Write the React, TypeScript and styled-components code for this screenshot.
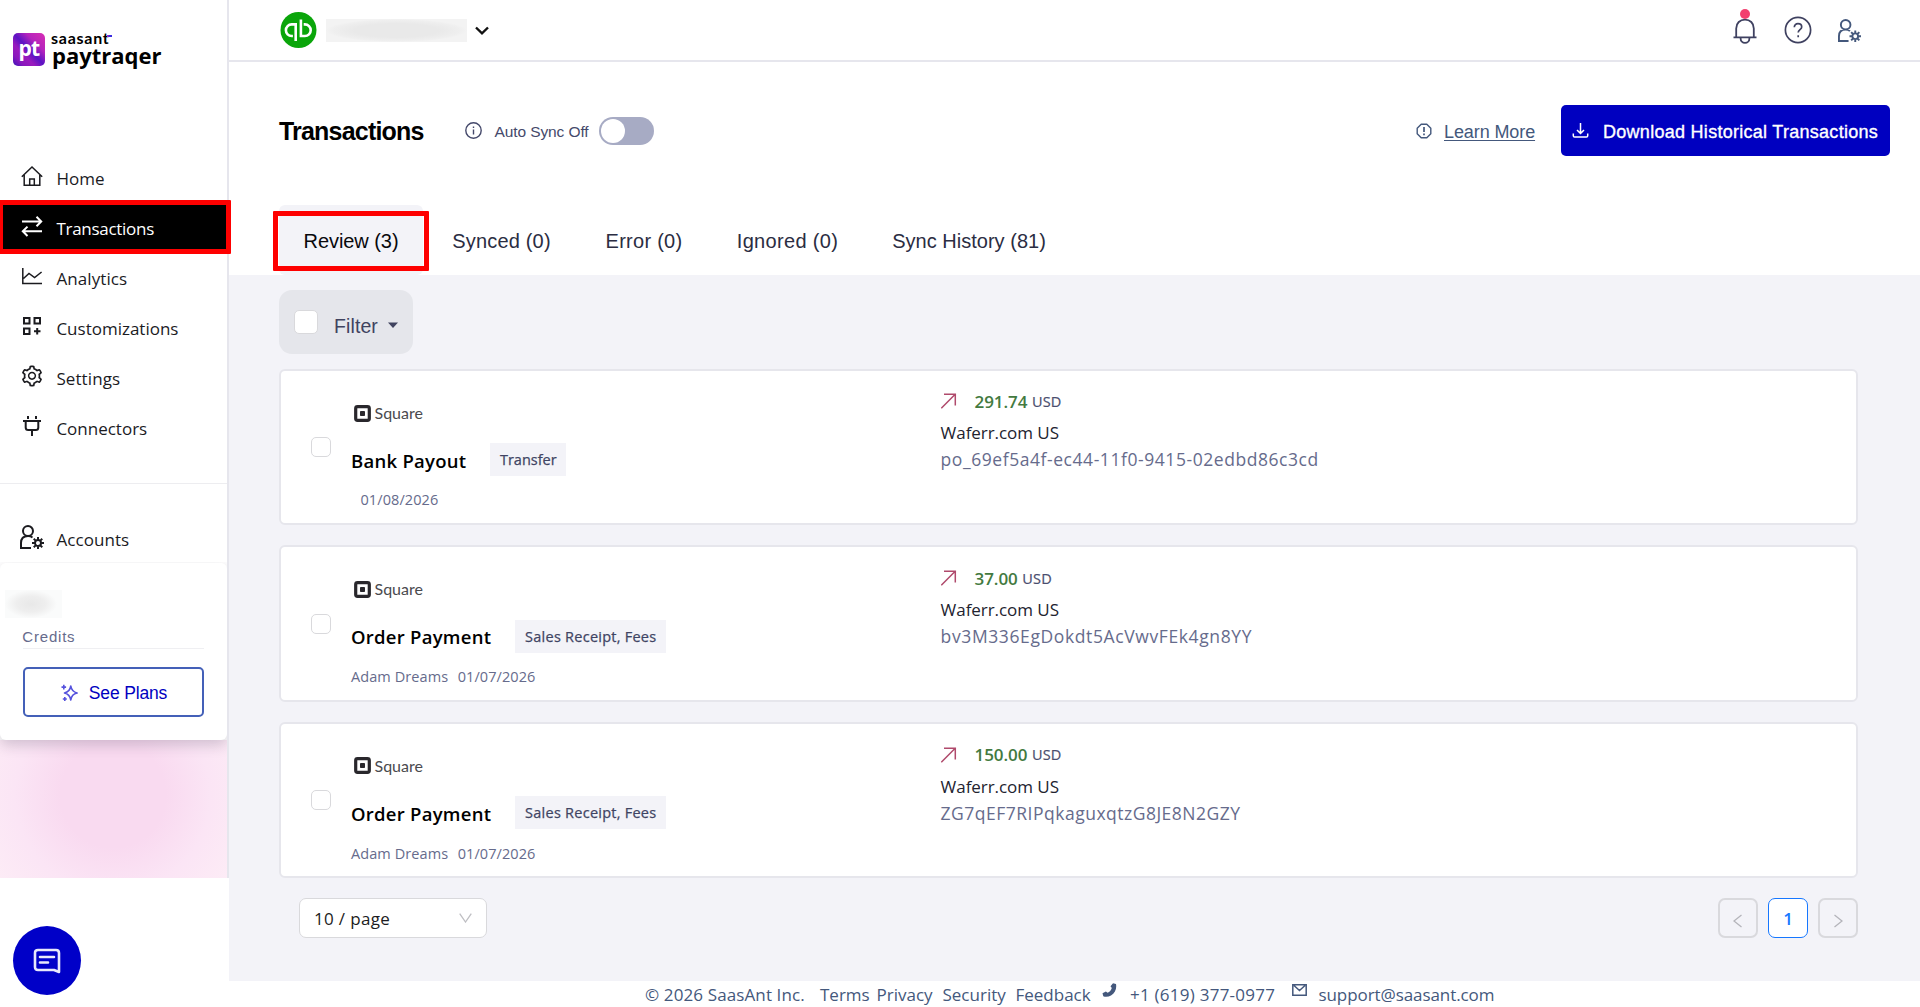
import React from "react";
import styled, { createGlobalStyle } from "styled-components";
import { GrUserSettings } from "react-icons/gr";
import { AiOutlineSetting } from "react-icons/ai";

const humanist = `"Open Sans", "Noto Sans", sans-serif`;
const grotesk = `"Liberation Sans", Arial, sans-serif`;

const Global = createGlobalStyle`
  * { box-sizing: border-box; }
  body { margin: 0; background: #fff; font-family: ${humanist}; color: #1c1c22; overflow: hidden; }
  svg { display: block; flex: none; }
`;

const Shell = styled.div`
  display: flex;
  height: 1007px;
  width: 1920px;
`;

/* ---------- sidebar ---------- */
const Aside = styled.aside`
  width: 229px;
  height: 878px;
  flex: none;
  border-right: 2px solid #e6e6ed;
  display: flex;
  flex-direction: column;
`;
const Brand = styled.div`
  height: 153px;
  padding: 25px 0 0 13px;
  display: flex;
  align-items: flex-start;
  gap: 6px;
`;
const BrandMark = styled.div`
  width: 32px;
  height: 33px;
  margin-top: 8px;
  border-radius: 5px;
  background: linear-gradient(to bottom left, #d92fb4 0%, #b424bd 30%, #5a14c4 50%, #9a1bbd 66%, #8a18bd 82%, #3a13b8 100%);
  color: #fff;
  font: 700 21px/30px ${humanist};
  letter-spacing: -0.8px;
  text-align: center;
`;
const BrandText = styled.div`
  display: flex;
  flex-direction: column;
  color: #000;
`;
const BrandTop = styled.span`
  position: relative;
  width: 61px;
  font: 700 16px/26px Lato, sans-serif;
  letter-spacing: 0.75px;
  height: 17px;
  &::after {
    content: "";
    position: absolute;
    right: 0;
    top: 10px;
    width: 5px;
    height: 2px;
    background: linear-gradient(90deg, #c02bc0, #3a2be0 50%);
  }
`;
const BrandName = styled.span`
  font: 700 22px/26px ${humanist};
  padding-left: 1px;
`;
const Nav = styled.nav`
  display: flex;
  flex-direction: column;
`;
const NavItem = styled.a<{ $active?: boolean; $ls?: number }>`
  position: relative;
  height: 50px;
  padding-left: 20px;
  display: flex;
  align-items: center;
  gap: 12.4px;
  font-size: 17px;
  letter-spacing: ${(p) => p.$ls ?? 0}px;
  background: ${(p) => (p.$active ? "#000" : "transparent")};
  color: ${(p) => (p.$active ? "#fff" : "#1b1b1f")};
  svg { margin-top: -4px; }
`;
const GrIcon = styled(GrUserSettings)<{ $c: string }>`
  path { stroke: ${(p) => p.$c}; }
`;
const Highlight = styled.div<{ $l: number; $t: number; $w: number; $h: number }>`
  position: absolute;
  z-index: 3;
  left: ${(p) => p.$l}px;
  top: ${(p) => p.$t}px;
  width: ${(p) => p.$w}px;
  height: ${(p) => p.$h}px;
  border: 5px solid #fe0000;
  border-radius: 1px;
`;
const AccountRow = styled.div`
  margin-top: 30px;
  padding-top: 30px;
  border-top: 1px solid #ededf0;
  height: 80px;
`;
const Credits = styled.section`
  height: 177px;
  padding: 27px 23px 0 23px;
  border-radius: 6px;
  background: #fff;
  position: relative;
  box-shadow: 0 5px 14px rgba(40, 30, 60, 0.2);
  clip-path: inset(-1px 0 -30px 0);
`;
const Redacted = styled.div`
  width: 57px;
  height: 28px;
  margin-left: -18px;
  background: radial-gradient(ellipse closest-side at 26px 14px, #e8e8e8, #eeeeee 55%, #fafbfb);
`;
const RedactedBar = styled.div`
  width: 141px;
  height: 23px;
  margin-left: 9px;
  background: radial-gradient(ellipse closest-side, #e9e9e9 60%, #efefef 90%, #f3f3f3);
`;
const CreditLabel = styled.div`
  margin: 7px 0 18px;
  height: 24px;
  border-bottom: 1px solid #efeff2;
  font: 15px/23px ${grotesk};
  letter-spacing: 0.8px;
  text-indent: -0.7px;
  color: #666b8c;
`;
const PlanButton = styled.button`
  width: 181px;
  height: 50px;
  padding: 2px 0 0 1px;
  border: 2px solid #4460b8;
  border-radius: 5px;
  background: #fff;
  display: flex;
  align-items: center;
  justify-content: center;
  gap: 11px;
  color: #0000c0;
  font: 17.5px ${grotesk};
  letter-spacing: -0.15px;
`;
const Glow = styled.div`
  flex: 1;
  background: radial-gradient(circle 150px at 113px 55px, #f9daf0 35%, #fbe5f5 65%, #fdedf6 100%);
`;
const ChatBubble = styled.button`
  position: absolute;
  left: 13px;
  top: 926px;
  width: 68px;
  height: 69px;
  padding: 0;
  border: 0;
  border-radius: 50%;
  background: #0000c8;
  display: grid;
  place-items: center;
`;

/* ---------- main ---------- */
const Main = styled.main`
  flex: 1;
  display: flex;
  flex-direction: column;
`;
const TopBar = styled.header`
  height: 62px;
  border-bottom: 2px solid #e6e6ed;
  padding: 0 59px 0 50.5px;
  display: flex;
  align-items: center;
`;
const TopIcons = styled.div`
  margin-left: auto;
  display: flex;
  align-items: center;
  gap: 26px;
`;
const BellWrap = styled.div`
  position: relative;
  margin-right: 1px;
  padding-top: 1px;
  &::after {
    content: "";
    position: absolute;
    left: 7px;
    top: -7px;
    width: 10px;
    height: 10px;
    border-radius: 50%;
    background: #f2406f;
  }
`;
const TitleRow = styled.div`
  height: 143px;
  padding: 43px 30px 0 50px;
  display: flex;
  align-items: flex-start;
  justify-content: space-between;
`;
const TitleGroup = styled.div`
  height: 51px;
  display: flex;
  align-items: center;
`;
const Title = styled.h1`
  margin: 0;
  width: 186px;
  font: 700 25px/30px ${grotesk};
  letter-spacing: -0.8px;
  color: #000;
`;
const SyncLabel = styled.span`
  margin: 0 8.5px 0 12.5px;
  padding-top: 2px;
  width: 96px;
  white-space: nowrap;
  font: 15.5px ${grotesk};
  letter-spacing: -0.1px;
  color: #45496b;
`;
const Toggle = styled.span`
  width: 55px;
  height: 28px;
  padding: 2px;
  border-radius: 14px;
  background: #a7abc4;
  &::before {
    content: "";
    display: block;
    width: 24px;
    height: 24px;
    border-radius: 50%;
    background: #fff;
  }
`;
const Learn = styled.a`
  margin: 0 26px 0 12px;
  padding-top: 3px;
  width: 91px;
  white-space: nowrap;
  font: 18px ${grotesk};
  letter-spacing: -0.1px;
  color: #44587c;
  text-decoration: underline;
  text-underline-offset: 2px;
  text-decoration-thickness: 1px;
`;
const Download = styled.button`
  width: 329px;
  height: 51px;
  padding: 0 0 0 11px;
  border: 0;
  border-radius: 5px;
  background: #0000c0;
  color: #fff;
  display: flex;
  align-items: center;
  gap: 14px;
  white-space: nowrap;
  font: 18px ${grotesk};
  letter-spacing: 0.28px;
  -webkit-text-stroke: 0.35px #fff;
  span { padding-top: 3px; }
`;
const Tabs = styled.div`
  position: relative;
  height: 70px;
  padding-left: 50px;
  display: flex;
`;
const Tab = styled.button<{ $w: number; $ls: number; $on?: boolean }>`
  width: ${(p) => p.$w}px;
  padding: 2px 0 0;
  border: 0;
  border-radius: 6px;
  background: ${(p) => (p.$on ? "#f3f3f8" : "transparent")};
  color: ${(p) => (p.$on ? "#08080c" : "#2b2d42")};
  font: 20px ${grotesk};
  letter-spacing: ${(p) => p.$ls}px;
  white-space: nowrap;
`;
const Content = styled.div`
  height: 706px;
  background: #f3f3f8;
  padding: 15px 62px 0 50px;
`;
const Filter = styled.div`
  width: 134px;
  height: 64px;
  padding: 0 15px;
  border-radius: 13px;
  background: #e5e6eb;
  display: flex;
  align-items: center;
  color: #40435f;
  font: 19.5px ${grotesk};
  letter-spacing: 0.1px;
  svg { margin-top: 6px; }
`;
const Check = styled.span<{ $s: number }>`
  display: block;
  flex: none;
  width: ${(p) => p.$s}px;
  height: ${(p) => p.$s}px;
  border: 1px solid #d9d9dc;
  border-radius: 5px;
  background: #fff;
`;
const FilterLabel = styled.span`
  margin: 9px 10px 0 16px;
`;
const Cards = styled.div`
  margin-top: 15px;
  display: flex;
  flex-direction: column;
  gap: 20px;
`;
const Card = styled.article`
  height: 156.4px;
  border: 2px solid #e6e6ec;
  border-radius: 6px;
  background: #fff;
  display: grid;
  grid-template-columns: 70px 589.6px 1fr;
`;
const CheckCell = styled.div`
  padding: 66.2px 0 0 30px;
`;
const InfoCell = styled.div<{ $gap: number }>`
  padding-top: 32px;
  display: grid;
  align-content: start;
  grid-template-rows: 20px 33px 20px;
  row-gap: ${(p) => p.$gap}px;
`;
const Vendor = styled.div`
  padding-left: 2.5px;
  display: flex;
  align-items: center;
  gap: 4px;
  font: 400 16px/20px Lato, sans-serif;
  color: #4a4a4e;
`;
const NameRow = styled.div`
  margin-top: 3px;
  height: 33px;
  display: flex;
  align-items: center;
`;
const Name = styled.span`
  font-weight: 600;
  font-size: 18.5px;
  letter-spacing: 0.26px;
  color: #000;
  padding-top: 1px;
`;
const Tag = styled.span<{ $w: number; $ls: number }>`
  margin-left: 24px;
  width: ${(p) => p.$w}px;
  height: 33px;
  background: #f3f3f8;
  color: #404463;
  font-size: 14.5px;
  letter-spacing: ${(p) => p.$ls}px;
  line-height: 33px;
  text-align: center;
  white-space: nowrap;
  -webkit-text-stroke: 0.25px #404463;
`;
const Meta = styled.div`
  display: flex;
  gap: 9.5px;
  font-size: 14.5px;
  line-height: 20px;
  letter-spacing: 0.08px;
  color: #666b8c;
`;
const MoneyCell = styled.div<{ $top: number }>`
  padding-top: ${(p) => p.$top}px;
`;
const AmountRow = styled.div`
  height: 22px;
  display: flex;
  align-items: center;
  color: #4a4e6e;
  font-size: 14.5px;
  letter-spacing: 0.2px;
  -webkit-text-stroke: 0.2px #4a4e6e;
  b {
    margin: 0 4.5px 0 18px;
    color: #437a3f;
    font-weight: 600;
    font-size: 17px;
    letter-spacing: -0.08px;
    -webkit-text-stroke: 0;
  }
`;
const Account = styled.div`
  margin-top: 8px;
  height: 26px;
  line-height: 26px;
  font-size: 17px;
  letter-spacing: -0.05px;
  color: #22232f;
`;
const Ref = styled.div<{ $ls: number }>`
  height: 28px;
  line-height: 27.4px;
  font-size: 17.5px;
  letter-spacing: ${(p) => p.$ls}px;
  color: #666b8c;
`;
const Pager = styled.div`
  margin-top: 20px;
  padding-left: 20px;
  display: flex;
  gap: 10px;
`;
const PageSize = styled.div`
  width: 188px;
  height: 40px;
  margin-right: auto;
  padding: 0 14px;
  border: 1px solid #d9d9dc;
  border-radius: 7px;
  background: #fff;
  display: flex;
  align-items: center;
  justify-content: space-between;
  font-size: 17px;
  letter-spacing: 0.33px;
  color: #1c1c22;
`;
const PageBtn = styled.button<{ $on?: boolean }>`
  width: 40px;
  height: 40px;
  padding: ${(p) => (p.$on ? "0" : "5px 0 0")};
  display: grid;
  place-items: center;
  border: ${(p) => (p.$on ? "1px solid #1677ff" : "2px solid #d9d9dd")};
  border-radius: 7px;
  background: ${(p) => (p.$on ? "#fff" : "transparent")};
  color: #1677ff;
  font: 600 17px ${humanist};
`;
const Footer = styled.footer`
  height: 26px;
  padding-left: 416px;
  display: flex;
  align-items: center;
  font-size: 17px;
  color: #44587c;
  white-space: nowrap;
`;
const FootItem = styled.span<{ $w: number; $ls?: number }>`
  width: ${(p) => p.$w}px;
  letter-spacing: ${(p) => p.$ls ?? 0}px;
`;
const FootIcon = styled.span<{ $w: number }>`
  width: ${(p) => p.$w}px;
  margin-top: -9px;
`;

/* ---------- icons ---------- */
const HomeIcon = () => (
  <svg width="24" height="24" viewBox="0 0 24 24" fill="none" stroke="currentColor" strokeWidth="1.5">
    <path d="M1.800 12.800 12 3l10.200 9.800M4.200 11v10.200h15.600V11M9.700 21v-6h4.600v6" />
  </svg>
);
const SwapIcon = () => (
  <svg width="24" height="24" viewBox="0 0 24 24" fill="none" stroke="currentColor" strokeWidth="2">
    <path d="M2 7.500h19M16.500 2.800l4.700 4.700-4.700 4.700M22 17.300H3M7.500 12.600l-4.700 4.700L7.500 22" />
  </svg>
);
const ChartIcon = () => (
  <svg width="24" height="24" viewBox="0 0 24 24" fill="none" stroke="currentColor" strokeWidth="1.500">
    <path d="M2.800 4v15.400H22M3.500 14.500 9 9.500l5.600 4L21.600 8" />
  </svg>
);
const WidgetIcon = () => (
  <svg width="24" height="24" viewBox="0 0 24 24" fill="none" stroke="currentColor" strokeWidth="2">
    <path d="M4 4h5.500v5.500H4zM14.500 4H20v5.500h-5.500zM4 14.500h5.500V20H4zM17.200 14v6.500M14 17.200h6.500" />
  </svg>
);
const PlugIcon = () => (
  <svg width="24" height="24" viewBox="0 0 24 24" fill="none" stroke="currentColor" strokeWidth="2">
    <path d="M3 7h18M5.700 7v6.500q0 2.500 2.500 2.500h7.600q2.500 0 2.500-2.500V7M8 2v3M16 2v3M12 16v6" />
  </svg>
);
const BellIcon = () => (
  <svg width="24" height="27" viewBox="0 0 24 27" fill="none" stroke="#3f4160" strokeWidth="1.800">
    <path d="M.5 20.300h23M3.200 20V11.500C3.200 6 7 2.600 12 2.600s8.800 3.400 8.800 8.900V20M7.600 21v.5a4.400 4.400 0 0 0 8.800 0V21" />
  </svg>
);
const HelpIcon = () => (
  <svg width="28" height="28" viewBox="0 0 28 28" fill="none" stroke="#3f4160" strokeWidth="1.700">
    <circle cx="14" cy="14" r="12.600" />
    <path d="M10.300 11.200c0-2.200 1.600-3.600 3.700-3.600s3.700 1.400 3.700 3.300c0 2.700-3.500 2.800-3.500 5.600M14.200 19.200v2" />
  </svg>
);
const InfoIcon = () => (
  <svg width="17" height="17" viewBox="0 0 17 17" fill="none" stroke="#45496b" strokeWidth="1.400">
    <circle cx="8.500" cy="8.500" r="7.700" />
    <path d="M8.500 7.500v5M8.500 4.400v1.600" />
  </svg>
);
const AlertIcon = () => (
  <svg width="16" height="16" viewBox="0 0 16 16" fill="none" stroke="#44587c" strokeWidth="1.400">
    <path d="M5.200 1.200h5.600l4 4v5.600l-4 4H5.200l-4-4V5.200z" strokeLinejoin="round" />
    <path d="M8 4v5M8 10.500v1.700" strokeWidth="1.700" />
  </svg>
);
const DownloadIcon = () => (
  <svg width="17" height="17" viewBox="0 0 17 17" fill="none" stroke="#fff" strokeWidth="1.500">
    <path d="M8.500 1v10.500M5 8l3.500 3.500L12 8M1.300 11.500v2.200q0 1.300 1.300 1.300h11.800q1.300 0 1.300-1.300v-2.200" />
  </svg>
);
const SparkIcon = () => (
  <svg width="17" height="18" viewBox="0 0 17 18" fill="none" stroke="#5552dd" strokeWidth="1.600" strokeLinejoin="round">
    <path d="M9.800 2q.8 5.600 6.300 7-5.500 1.200-6.300 7-1-5.800-6.300-7 5.400-1.400 6.300-7z" />
    <path d="M2.800.8v4.600M.5 3.100h4.600M3.800 13v4M1.800 15h4" />
  </svg>
);
const ChatIcon = () => (
  <svg width="28" height="26" viewBox="0 0 28 26" fill="none" stroke="#e8e8fb" strokeWidth="2.600" strokeLinejoin="round" strokeLinecap="round">
    <path d="M5 2h18q3 0 3 3v19l-5-2H5q-3 0-3-3V5q0-3 3-3z" />
    <path d="M7 9h14M7 14.500h8" />
  </svg>
);
const QbIcon = () => (
  <svg width="37" height="37" viewBox="0 0 37 37" fill="none" stroke="#fff" strokeWidth="2.600">
    <circle cx="18.500" cy="18" r="18" fill="#0aa50a" stroke="none" />
    <path d="M15.700 29V12.400h-4a5.800 5.800 0 0 0 0 11.600h1.200M20.900 7.500V24h4a5.800 5.800 0 0 0 0-11.600h-1.200" />
  </svg>
);
const SquareIcon = () => (
  <svg width="17" height="17" viewBox="0 0 17 17">
    <rect x="1.700" y="1.700" width="13.600" height="13.600" rx="1.800" fill="none" stroke="#29272c" strokeWidth="3.200" />
    <rect x="6" y="6" width="5" height="5" rx=".8" fill="#29272c" />
  </svg>
);
const OutArrow = () => (
  <svg width="16" height="16" viewBox="0 0 16 16" fill="none" stroke="#b04a6c" strokeWidth="1.500">
    <path d="M.3 15.200 14.200 1.300M3 1.200h11.300v11.300" />
  </svg>
);
const Chevron = ({ d, w, h, c, s = 1.3 }: { d: string; w: number; h: number; c: string; s?: number }) => (
  <svg width={w} height={h} viewBox={`0 0 ${w} ${h}`} fill="none" stroke={c} strokeWidth={s}>
    <path d={d} />
  </svg>
);

/* ---------- data ---------- */
const nav = [
  { label: "Home", icon: <HomeIcon />, ls: 0 },
  { label: "Transactions", icon: <SwapIcon />, active: true, ls: -0.28 },
  { label: "Analytics", icon: <ChartIcon />, ls: 0.1 },
  { label: "Customizations", icon: <WidgetIcon />, ls: 0 },
  { label: "Settings", icon: <AiOutlineSetting size={24} />, ls: 0.1 },
  { label: "Connectors", icon: <PlugIcon />, ls: 0 },
];
const tabs = [
  { label: "Review (3)", w: 144, ls: -0.06, on: true },
  { label: "Synced (0)", w: 157, ls: 0.18 },
  { label: "Error (0)", w: 128, ls: 0.27 },
  { label: "Ignored (0)", w: 159, ls: 0.33 },
  { label: "Sync History (81)", w: 204, ls: 0.02 },
];
const rows = [
  { name: "Bank Payout", tag: "Transfer", tagW: 76, tagLs: 0, gap: 17, who: "", date: "01/08/2026", amount: "291.74", id: "po_69ef5a4f-ec44-11f0-9415-02edbd86c3cd", ls: 0.56, top: 19 },
  { name: "Order Payment", tag: "Sales Receipt, Fees", tagW: 151, tagLs: 0.25, gap: 17.4, who: "Adam Dreams", date: "01/07/2026", amount: "37.00", id: "bv3M336EgDokdt5AcVwvFEk4gn8YY", ls: 0.61, top: 20 },
  { name: "Order Payment", tag: "Sales Receipt, Fees", tagW: 151, tagLs: 0.25, gap: 17.6, who: "Adam Dreams", date: "01/07/2026", amount: "150.00", id: "ZG7qEF7RIPqkaguxqtzG8JE8N2GZY", ls: 0.5, top: 20 },
];

export default function App() {
  return (
    <Shell>
      <Global />
      <Aside>
        <Brand>
          <BrandMark>pt</BrandMark>
          <BrandText>
            <BrandTop>saasant</BrandTop>
            <BrandName>paytraqer</BrandName>
          </BrandText>
        </Brand>
        <Nav>
          {nav.map((n) => (
            <NavItem key={n.label} $active={n.active} $ls={n.ls}>
              {n.icon}
              {n.label}
              {n.active && <Highlight $l={-2} $t={-3.5} $w={232.5} $h={54.5} />}
            </NavItem>
          ))}
        </Nav>
        <AccountRow>
          <NavItem $ls={0.08}>
            <GrIcon size={24} $c="#1b1b1f" />
            Accounts
          </NavItem>
        </AccountRow>
        <Credits>
          <Redacted />
          <CreditLabel>Credits</CreditLabel>
          <PlanButton>
            <SparkIcon />
            See Plans
          </PlanButton>
        </Credits>
        <Glow />
      </Aside>
      <Main>
        <TopBar>
          <QbIcon />
          <RedactedBar />
          <Chevron d="M9 1.500 15 7.300l6-5.800" w={32} h={9} c="#111" s={2.4} />
          <TopIcons>
            <BellWrap>
              <BellIcon />
            </BellWrap>
            <HelpIcon />
            <GrIcon size={23} $c="#44587c" />
          </TopIcons>
        </TopBar>
        <TitleRow>
          <TitleGroup>
            <Title>Transactions</Title>
            <InfoIcon />
            <SyncLabel>Auto Sync Off</SyncLabel>
            <Toggle />
          </TitleGroup>
          <TitleGroup>
            <AlertIcon />
            <Learn>Learn More</Learn>
            <Download>
              <DownloadIcon />
              <span>Download Historical Transactions</span>
            </Download>
          </TitleGroup>
        </TitleRow>
        <Tabs>
          {tabs.map((t) => (
            <Tab key={t.label} $w={t.w} $ls={t.ls} $on={t.on}>
              {t.label}
            </Tab>
          ))}
          <Highlight $l={43.5} $t={6} $w={156} $h={60} />
        </Tabs>
        <Content>
          <Filter>
            <Check $s={24} />
            <FilterLabel>Filter</FilterLabel>
            <svg width="10" height="6" viewBox="0 0 10 6">
              <path d="M0 .5h10L5 6z" fill="#40435f" />
            </svg>
          </Filter>
          <Cards>
            {rows.map((r) => (
              <Card key={r.id}>
                <CheckCell>
                  <Check $s={20} />
                </CheckCell>
                <InfoCell $gap={r.gap}>
                  <Vendor>
                    <SquareIcon />
                    Square
                  </Vendor>
                  <NameRow>
                    <Name>{r.name}</Name>
                    <Tag $w={r.tagW} $ls={r.tagLs}>{r.tag}</Tag>
                  </NameRow>
                  <Meta>
                    <span>{r.who}</span>
                    <span>{r.date}</span>
                  </Meta>
                </InfoCell>
                <MoneyCell $top={r.top}>
                  <AmountRow>
                    <OutArrow />
                    <b>{r.amount}</b>
                    <span>USD</span>
                  </AmountRow>
                  <Account>Waferr.com US</Account>
                  <Ref $ls={r.ls}>{r.id}</Ref>
                </MoneyCell>
              </Card>
            ))}
          </Cards>
          <Pager>
            <PageSize>
              10 / page
              <Chevron d="M.7.7 6.500 9 12.300.7" w={13} h={10} c="#bfbfc3" />
            </PageSize>
            <PageBtn>
              <Chevron d="M8.500 1 1 7l7.500 6" w={10} h={14} c="#b4b4ba" />
            </PageBtn>
            <PageBtn $on>1</PageBtn>
            <PageBtn>
              <Chevron d="M1.500 1 9 7l-7.500 6" w={10} h={14} c="#b4b4ba" />
            </PageBtn>
          </Pager>
        </Content>
        <Footer>
          <FootItem $w={175} $ls={0.12}>© 2026 SaasAnt Inc.</FootItem>
          <FootItem $w={56.5}>Terms</FootItem>
          <FootItem $w={66}>Privacy</FootItem>
          <FootItem $w={73}>Security</FootItem>
          <FootItem $w={86.5}>Feedback</FootItem>
          <FootIcon $w={28}>
            <svg width="15" height="14" viewBox="0 0 15 14" fill="#44587c">
              <path d="M11 .2 14 .9c.9 4.500-.8 9-5 11.500-2.500 1.500-5.500 1.700-7.700.800L.5 10.300l3.400-1.700 1.700 1.200c2-.9 3.600-2.600 4.200-4.900L8.500 3.300z" />
            </svg>
          </FootIcon>
          <FootItem $w={162} $ls={0.25}>+1 (619) 377-0977</FootItem>
          <FootIcon $w={26.5}>
            <svg width="15" height="12" viewBox="0 0 15 12" fill="none" stroke="#44587c" strokeWidth="1.500">
              <path d="M.8.8h13.400v10.400H.8zM2 1.500l5.500 5 5.500-5" />
            </svg>
          </FootIcon>
          <FootItem $w={176} $ls={-0.08}>support@saasant.com</FootItem>
        </Footer>
      </Main>
      <ChatBubble aria-label="Chat">
        <ChatIcon />
      </ChatBubble>
    </Shell>
  );
}
